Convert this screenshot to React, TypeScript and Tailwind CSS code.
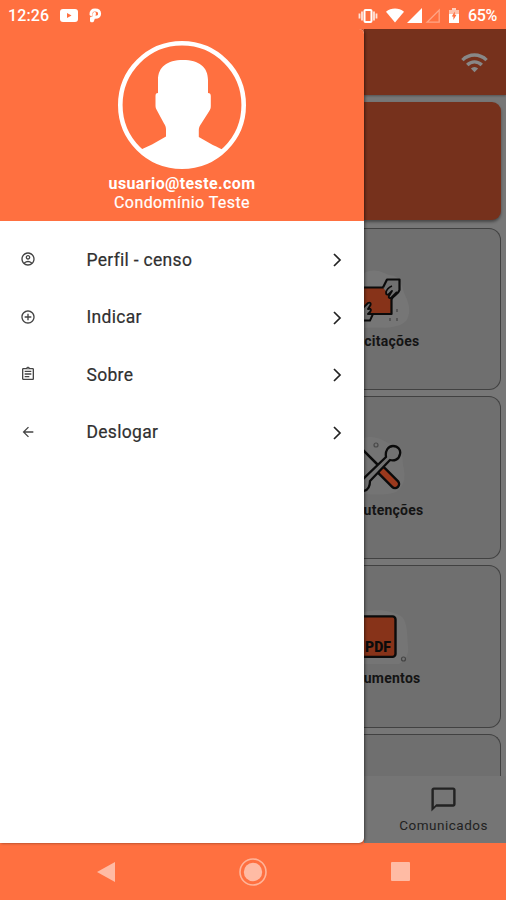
import React from "react";
import {
    MdAddCircleOutline,
    MdArrowBack,
    MdOutlineAccountCircle,
    MdOutlineAssignment,
    MdOutlineChatBubbleOutline,
    MdWifi,
} from "react-icons/md";

const menuItems = [
    { id: 1, label: "Perfil - censo", icon: MdOutlineAccountCircle },
    { id: 2, label: "Indicar", icon: MdAddCircleOutline },
    { id: 3, label: "Sobre", icon: MdOutlineAssignment },
    { id: 4, label: "Deslogar", icon: MdArrowBack },
];

const StatusBar = () => (
    <div className="z-20 flex h-[29px] shrink-0 items-center justify-between bg-[#ff7040] pt-[2px] pr-[6px] pl-[8px] text-[16px] font-medium text-white">
        <div className="flex items-center">
            <span className="w-[42px] tracking-[0.1px]">12:26</span>
            <svg className="ml-[10px]" width="18" height="13" viewBox="0 0 18 13">
                <rect width="18" height="13" rx="3" fill="#fff" />
                <path d="M7 4v5l4.5-2.500z" fill="#ff7040" />
            </svg>
            <svg className="ml-[11px]" width="13" height="15" viewBox="0 0 13 15" fill="none">
                <path
                    d="M2 6.500C1.800 3.200 3.500 2 6 2c2.800 0 4.600 1.300 4.600 3.800S8.800 9.500 6 9.300M5.500 5.500l-1 4.500M2.500 10v2.800h1L4.500 10"
                    stroke="#fff"
                    strokeWidth="3"
                    strokeLinecap="round"
                    strokeLinejoin="round"
                />
            </svg>
        </div>
        <div className="flex items-center">
            <svg width="20" height="14" viewBox="0 0 20 14" fill="none" stroke="#fff">
                <rect x="6.500" y="1" width="7" height="12" rx="1" strokeWidth="2" />
                <path d="M4 2.500v9M16 2.500v9" strokeWidth="1.800" stroke="#ffe3d9" />
                <path d="M1.500 4.500v5M18.500 4.500v5" strokeWidth="1.800" stroke="#ffe3d9" />
            </svg>
            <svg className="ml-[8px]" width="18" height="15" viewBox="0 0 19 15">
                <path d="M0 3.6C5.4-.9 13.6-.9 19 3.6L9.5 15z" fill="#fff" />
            </svg>
            <svg className="ml-[3px]" width="15" height="15" viewBox="0 0 15 15">
                <path d="M0 15 15 0v15z" fill="#fff" />
            </svg>
            <svg className="ml-[3px]" width="15" height="15" viewBox="0 0 15 15">
                <path d="M2 14.2 14.2 2v12.2z" fill="none" stroke="#ffa586" strokeWidth="1.3" />
            </svg>
            <svg className="ml-[9px]" width="10" height="15" viewBox="0 0 10 15">
                <path d="M3 0h4v2H3z" fill="#ffd0bf" />
                <path d="M0 2h10v4H0z" fill="#ffc0aa" />
                <path d="M0 6h10v9H0z" fill="#fff" />
                <path d="M5.8 3.5v3.3h1.7L4.4 12V8.5H2.8z" fill="#ff7040" />
            </svg>
            <span className="ml-[9px] w-[32px] tracking-[-0.3px]">65%</span>
        </div>
    </div>
);

const Avatar = () => (
    <svg width="130" height="130" viewBox="0 0 130 130">
        <defs>
            <clipPath id="avatar">
                <circle cx="65" cy="65" r="63" />
            </clipPath>
        </defs>
        <path
            clipPath="url(#avatar)"
            fill="#fff"
            d="M41 53V40C41 27 50 20 66 20S91 27 91 40v13c2 0 2.8 1 2.8 3v10c0 2-.5 3.5-1.5 5L84 84c-1.5 2-2.2 4-2.2 6v7l14 8c5 2 8 4 11.5 5.5L130 130H0l23-20 12-5.5 14-8v-7c0-2-.5-4-2-6l-7-13c-1-1.5-1.5-3-1.5-5V56c0-2 .5-3 2.5-3z"
        />
        <circle cx="65" cy="65" r="61.7" fill="none" stroke="#fff" strokeWidth="4.6" />
    </svg>
);

const Drawer = () => (
    <div className="z-10 flex w-[364px] shrink-0 flex-col overflow-hidden rounded-r-[5px] bg-white shadow-[1px_0_3px_rgba(0,0,0,0.5)]">
        <div className="flex h-[192px] shrink-0 flex-col items-center bg-[#ff7040] pt-[11px] text-[16px] leading-[19px] text-white">
            <Avatar />
            <div className="mt-[4px] font-bold tracking-[0.38px]">usuario@teste.com</div>
            <div className="tracking-[0.42px] [-webkit-text-stroke:0.2px_#fff]">Condomínio Teste</div>
        </div>
        <div className="flex flex-col pt-[10px]">
            {menuItems.map(({ id, label, icon: Icon }) => (
                <div key={id} className="flex h-[57.5px] items-center pr-[20px] pl-[20px]">
                    <Icon className="mb-px h-[16px] w-[16px] text-[#444]" />
                    <span className="ml-[50.5px] grow text-[17.5px] tracking-[0.3px] text-[#303030] [-webkit-text-stroke:0.2px_#303030]">
                        {label}
                    </span>
                    <svg className="mt-px" width="14" height="14" viewBox="0 0 14 14">
                        <path d="m4 1 6 6-6 6" fill="none" stroke="#222" strokeWidth="1.7" />
                    </svg>
                </div>
            ))}
        </div>
    </div>
);

const HandsIcon = () => (
    <svg width="52" height="64" viewBox="0 0 52 64" stroke="#0b0b0b" strokeWidth="2.2" strokeLinejoin="round">
        <path d="M0 5C12-1 21 6 25 7c12 0 13 12 16 20 6 12 5 20 1 26-9 9-27 6-42 7z" fill="#767676" stroke="none" />
        <path d="M-2 19.5h29.500V46H-2z" fill="#873319" />
        <path d="m19 19.5 4-8h12.500v10.500c-1 4-6 5-8 9" fill="#707070" />
        <path d="M28 18c-3 1-6 4-6 7 0 2 2 2 3 1l3-3-3 5c-1 2 1 3 3 1l5-5" fill="#707070" strokeWidth="1.800" />
        <path
            d="M-1 44v-4l5-5c2-1 3 0 2.500 2L4 41c3-1 3.500 1 2 3l-2 2h5l-3 6.500H-1"
            fill="#707070"
            strokeWidth="1.900"
        />
        <path d="M33 41v3M33 50v3M26 50v3" stroke="#4c4c4c" strokeWidth="1.5" />
    </svg>
);

const ToolsIcon = () => (
    <svg width="52" height="64" viewBox="0 0 52 64" strokeLinecap="round" strokeLinejoin="round">
        <path d="M0 1c8-3 18 1 24 5 12 2 15 10 15 22 3 12 2 20-7 27-7 3-18 3-32 2z" fill="#747474" />
        <path d="m-3 11 17 17" stroke="#0b0b0b" strokeWidth="2.5" />
        <path d="m18 34 13 13" stroke="#0b0b0b" strokeWidth="10.5" />
        <path d="m18 34 13 13" stroke="#9b391d" strokeWidth="5.6" />
        <path
            d="M-4 45 22 20c-1-6 2-11 7-11 5 0 8 4 7 8-1 6-6 7-10 6L6 44c0 5-2 9-6 10h-4z"
            fill="#727272"
            stroke="#0b0b0b"
            strokeWidth="2.3"
        />
        <circle cx="12" cy="8" r="2" fill="none" stroke="#494949" strokeWidth="1.2" />
    </svg>
);

const PdfIcon = () => (
    <svg width="52" height="64" viewBox="0 0 52 64">
        <path d="M0 7C16 3 28 6 37 11c7 5 6 20 7 30 1 8-2 14-9 18H0z" fill="#757575" />
        <rect x="-8" y="11.4" width="39.5" height="40.5" rx="3" fill="#873319" stroke="#0b0b0b" strokeWidth="2.4" />
        <text x="1" y="46.500" textLength="26" fontSize="14" fontWeight="900" fill="#0b0b0b">
            PDF
        </text>
        <circle cx="39.5" cy="54" r="2" fill="none" stroke="#444" strokeWidth="1.2" />
    </svg>
);

// Only the strip of the home screen to the right of the drawer is visible
const cards = [
    { id: 1, label: "citações", icon: HandsIcon, pad: "pr-[80px]" },
    { id: 2, label: "utenções", icon: ToolsIcon, pad: "pr-[76px]" },
    { id: 3, label: "umentos", icon: PdfIcon, pad: "pr-[79px]" },
];

const HomeStrip = () => (
    <div className="flex min-w-0 grow flex-col overflow-hidden bg-[#777]">
        <div className="flex h-[66px] shrink-0 items-center justify-end bg-[#76311c] pr-[17px] shadow-[0_1px_2px_rgba(0,0,0,0.3)]">
            <MdWifi className="h-[29px] w-[29px] text-[#888]" />
        </div>
        <div className="flex min-h-0 grow flex-col overflow-hidden pr-[5.5px]">
            <div className="mt-[7px] h-[118px] shrink-0 rounded-r-[9px] bg-[#76311c] shadow-[0_2px_3px_rgba(0,0,0,0.4)]" />
            <div className="mt-[7.500px] flex flex-col gap-[6px]">
                {cards.map(({ id, label, icon: Icon, pad }) => (
                    <div
                        key={id}
                        className="flex h-[162.7px] flex-col rounded-r-[12px] border border-l-0 border-[#414141] bg-[#6f6f6f] pt-[39.5px]"
                    >
                        <Icon />
                        <div
                            className={`flex justify-end overflow-hidden text-[14px] leading-[19px] font-bold tracking-[0.25px] text-[#141414] ${pad}`}
                        >
                            {label}
                        </div>
                    </div>
                ))}
                <div className="h-[60px] shrink-0 rounded-tr-[12px] border-t border-r border-[#414141] bg-[#6f6f6f]" />
            </div>
        </div>
        <div className="flex h-[67px] shrink-0 flex-col items-end bg-[#757575] pt-[9px] pr-[18px] text-[#222]">
            <MdOutlineChatBubbleOutline className="mr-[30px] h-[29px] w-[29px]" />
            <span className="mt-[2px] text-[13.5px] leading-[18px] tracking-[0.5px]">Comunicados</span>
        </div>
    </div>
);

const NavBar = () => (
    <div className="flex h-[57px] shrink-0 items-center justify-between bg-[#ff7040] pr-[96px] pl-[97px]">
        <svg width="18" height="20" viewBox="0 0 18 20">
            <path d="M18 0v20L0 10z" fill="#ffbba4" />
        </svg>
        <svg width="28" height="28" viewBox="0 0 28 28">
            <circle cx="14" cy="14" r="13" fill="none" stroke="#ffb499" strokeWidth="1.6" />
            <circle cx="14" cy="14" r="9.2" fill="#ffbba4" />
        </svg>
        <div className="h-[19px] w-[19px] rounded-[1px] bg-[#ffbba4]" />
    </div>
);

const App = () => {
    return (
        <div className="flex h-[900px] w-[506px] flex-col overflow-hidden bg-[#ff7040] font-['Roboto',sans-serif]">
            <StatusBar />
            <div className="flex min-h-0 grow">
                <Drawer />
                <HomeStrip />
            </div>
            <NavBar />
        </div>
    );
};

export default App;
